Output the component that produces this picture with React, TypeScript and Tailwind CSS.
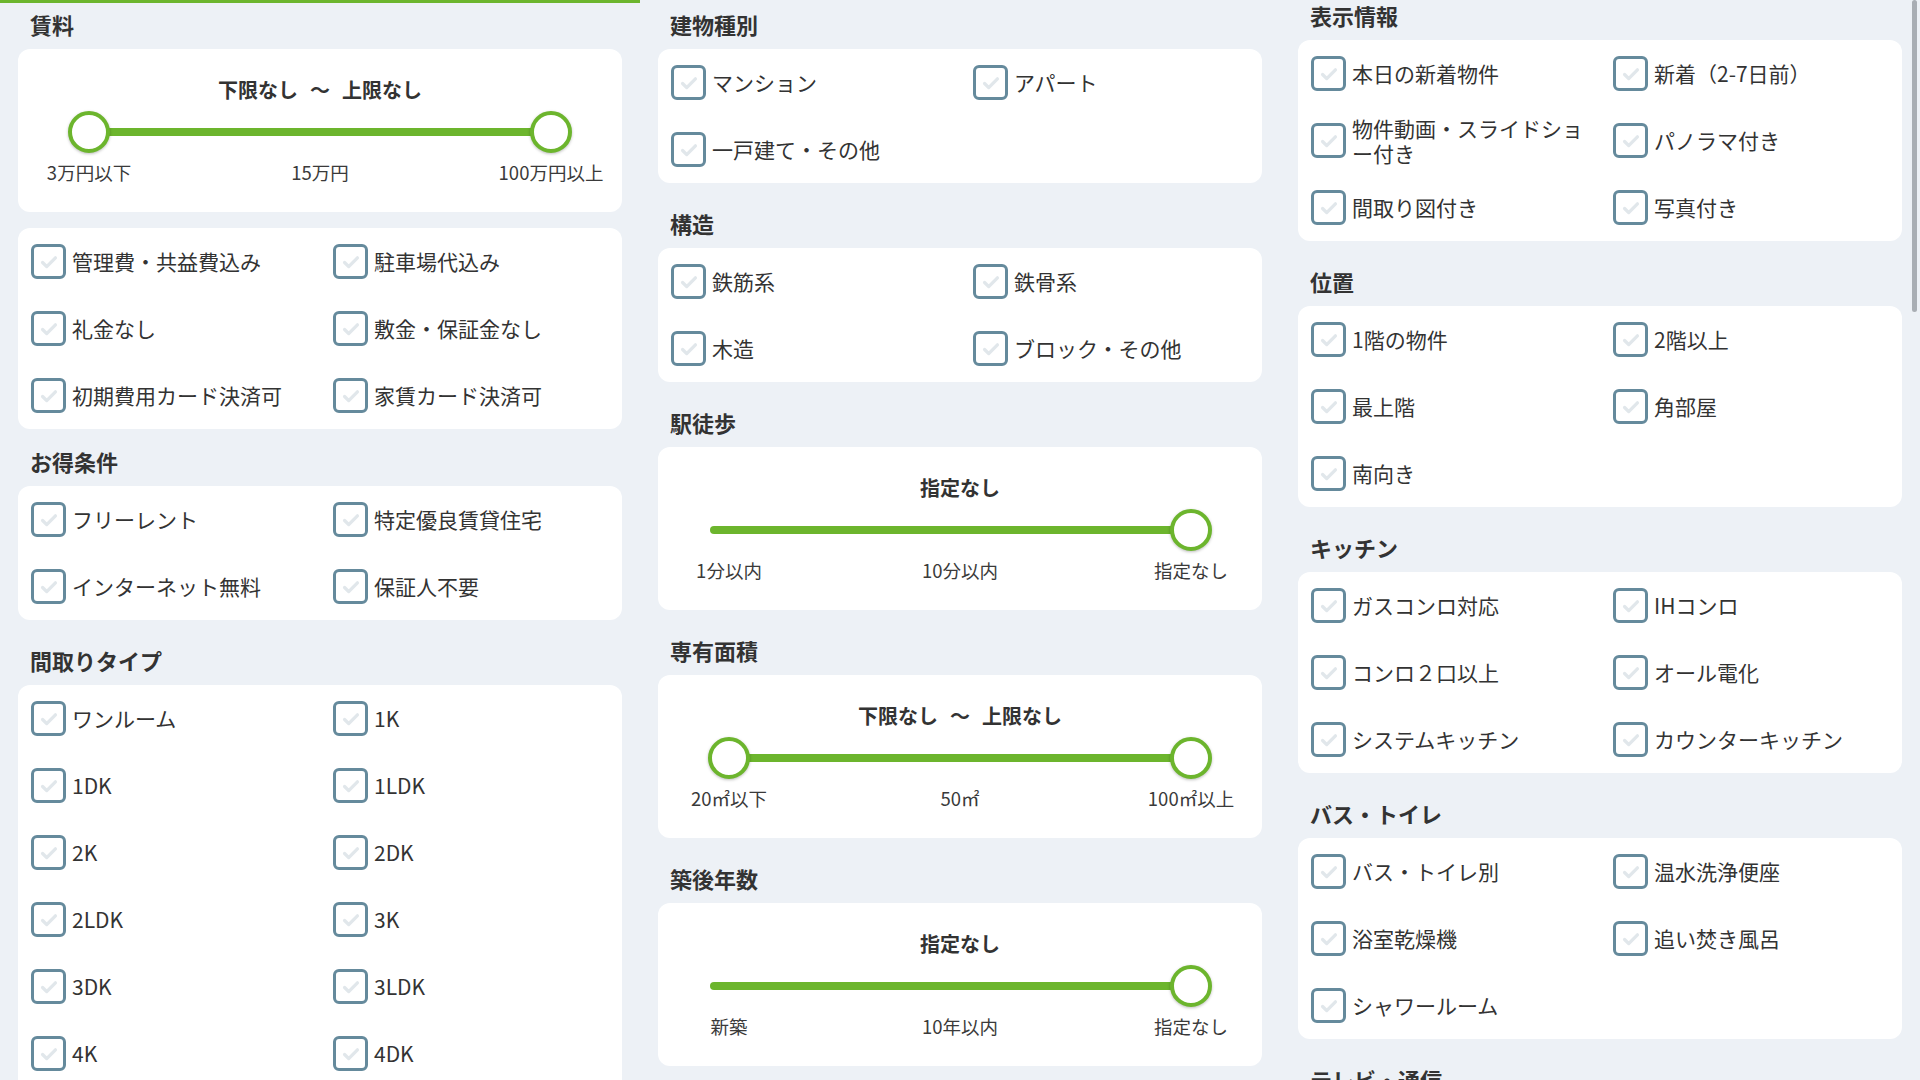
import React from 'react';

type SliderProps = {
  label: React.ReactNode;
  ticks: [string, string, string];
  single?: boolean;
};

const FONT = '[font-family:"Noto_Sans_CJK_JP","Noto_Sans",sans-serif]';

const Header = ({ title, pt = 'pt-[27px]' }: { title: string; pt?: string }) => (
  <div className={`${pt} pb-[12px] pl-[12px] text-[22px] leading-[26px] font-bold text-[#333]`}>{title}</div>
);

const CheckBox = () => (
  <div className="w-[35px] h-[35px] shrink-0 rounded-[6px] border-[3px] border-[#658a9c] bg-white flex items-center justify-center">
    <svg viewBox="0 0 24 24" className="w-[22px] h-[22px]" fill="none">
      <path d="M5 12.5l4.5 4.5L19 7.5" stroke="#e1e7eb" strokeWidth="3.6" strokeLinecap="round" strokeLinejoin="round" />
    </svg>
  </div>
);

const CheckCard = ({ items }: { items: string[] }) => (
  <div className="bg-white rounded-xl grid grid-cols-2">
    {items.map((it) => (
      <div key={it} className="h-[67px] flex items-center gap-[6px] pl-[13px] pr-[12px]">
        <CheckBox />
        <span className="text-[21px] leading-[25px] text-[#333]">{it}</span>
      </div>
    ))}
  </div>
);

const Range = () => (
  <>
    下限なし<span className="mx-[12px]">〜</span>上限なし
  </>
);

const SliderCard = ({ label, ticks, single }: SliderProps) => (
  <div className="bg-white rounded-xl pt-[28px] pb-[28px]">
    <div className="text-center text-[20px] leading-[26px] font-bold text-[#333]">{label}</div>
    <div className="relative h-[42px] mx-[50px] mt-[8px]">
      <div className={`absolute top-[17px] h-[8px] rounded-full bg-[#6cb52d] ${single ? 'left-[2px] right-[20px]' : 'left-[20px] right-[20px]'}`} />
      {!single && (
        <div className="absolute left-0 top-0 w-[42px] h-[42px] rounded-full border-[4px] border-[#6cb52d] bg-white shadow-[0_1px_3px_rgba(0,0,0,0.25)]" />
      )}
      <div className="absolute right-0 top-0 w-[42px] h-[42px] rounded-full border-[4px] border-[#6cb52d] bg-white shadow-[0_1px_3px_rgba(0,0,0,0.25)]" />
    </div>
    <div className="flex justify-between px-[6px] mt-[7px]">
      {ticks.map((t, i) => (
        <div key={i} className="w-[130px] text-center text-[18.5px] leading-[24px] text-[#3a3a3a]">
          {t}
        </div>
      ))}
    </div>
  </div>
);

export default function App() {
  return (
    <div className={`relative w-full h-[1080px] overflow-hidden bg-[#edf1f6] ${FONT}`}>
      <div className="absolute top-0 left-0 w-[640px] h-[3px] bg-[#6cb52d]" />
      <div className="absolute top-0 left-[1912px] w-[5px] h-[312px] rounded-full bg-[#a9aeb4]" />

      <div className="grid grid-cols-3 gap-[36px] px-[18px]">
        {/* column 1 */}
        <div>
          <Header title="賃料" pt="pt-[11px]" />
          <SliderCard label={<Range />} ticks={['3万円以下', '15万円', '100万円以上']} />
          <div className="mt-[16px]">
            <CheckCard items={['管理費・共益費込み', '駐車場代込み', '礼金なし', '敷金・保証金なし', '初期費用カード決済可', '家賃カード決済可']} />
          </div>
          <Header title="お得条件" pt="pt-[19px]" />
          <CheckCard items={['フリーレント', '特定優良賃貸住宅', 'インターネット無料', '保証人不要']} />
          <Header title="間取りタイプ" />
          <CheckCard items={['ワンルーム', '1K', '1DK', '1LDK', '2K', '2DK', '2LDK', '3K', '3DK', '3LDK', '4K', '4DK', '4LDK', '5K以上']} />
        </div>

        {/* column 2 */}
        <div>
          <Header title="建物種別" pt="pt-[11px]" />
          <CheckCard items={['マンション', 'アパート', '一戸建て・その他']} />
          <Header title="構造" />
          <CheckCard items={['鉄筋系', '鉄骨系', '木造', 'ブロック・その他']} />
          <Header title="駅徒歩" />
          <SliderCard label="指定なし" single ticks={['1分以内', '10分以内', '指定なし']} />
          <Header title="専有面積" />
          <SliderCard label={<Range />} ticks={['20㎡以下', '50㎡', '100㎡以上']} />
          <Header title="築後年数" />
          <SliderCard label="指定なし" single ticks={['新築', '10年以内', '指定なし']} />
        </div>

        {/* column 3 */}
        <div>
          <Header title="表示情報" pt="pt-[2px]" />
          <CheckCard items={['本日の新着物件', '新着（2-7日前）', '物件動画・スライドショー付き', 'パノラマ付き', '間取り図付き', '写真付き']} />
          <Header title="位置" />
          <CheckCard items={['1階の物件', '2階以上', '最上階', '角部屋', '南向き']} />
          <Header title="キッチン" />
          <CheckCard items={['ガスコンロ対応', 'IHコンロ', 'コンロ２口以上', 'オール電化', 'システムキッチン', 'カウンターキッチン']} />
          <Header title="バス・トイレ" />
          <CheckCard items={['バス・トイレ別', '温水洗浄便座', '浴室乾燥機', '追い焚き風呂', 'シャワールーム']} />
          <Header title="テレビ・通信" />
          <CheckCard items={['インターネット対応', 'CATV']} />
        </div>
      </div>
    </div>
  );
}
